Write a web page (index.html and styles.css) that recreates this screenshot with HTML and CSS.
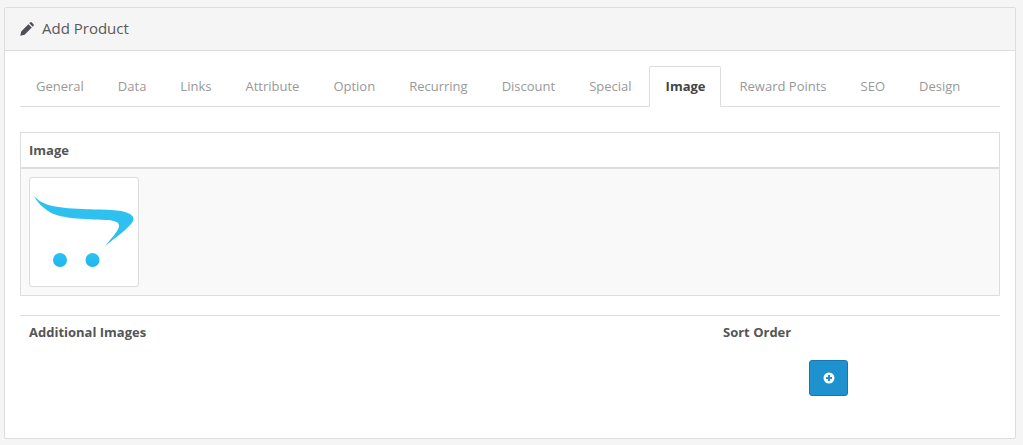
FILE: index.html
```html
<!DOCTYPE html>
<html lang="en">
<head>
<meta charset="utf-8">
<title>Add Product</title>
<link rel="stylesheet" href="styles.css">
</head>
<body>
<div class="panel">
  <div class="panel-heading">
    <svg class="pencil" viewBox="0 0 14 14" width="14" height="14"><path d="M0.3 13.7 L1.2 9.4 L8.4 2.2 L11.8 5.6 L4.6 12.8 Z M9.3 1.3 L10.4 0.3 Q11 -0.1 11.6 0.3 L13.7 2.4 Q14.1 3 13.7 3.6 L12.7 4.7 Z" fill="#4f4f57"/></svg>
    <h3>Add Product</h3>
  </div>
  <div class="panel-body">
    <ul class="tabs">
      <li>General</li><li>Data</li><li>Links</li><li>Attribute</li><li>Option</li><li>Recurring</li><li>Discount</li><li>Special</li><li class="active">Image</li><li>Reward Points</li><li>SEO</li><li>Design</li>
    </ul>
    <div class="image-table">
      <div class="image-head">Image</div>
      <div class="image-cell">
        <div class="thumb">
          <svg viewBox="0 0 108 108" width="108" height="108">
            <defs><linearGradient id="dot" x1="0" y1="0" x2="0" y2="1"><stop offset="0" stop-color="#2cc5f2"/><stop offset="1" stop-color="#1fb3ec"/></linearGradient></defs>
            <path d="M4 18 C12 27 24 30 53 31 C72 32 92 31 100 36 C105 39 104 43 101 46 C94 54 85 60 75 68 C82 60 87 54 89 49 C90 44 84 42 76 42 C54 41 30 41 18 33 C12 29 7 24 4 18 Z" fill="#2ec0ee"/>
            <circle cx="30" cy="82" r="7" fill="url(#dot)"/>
            <circle cx="62.500" cy="82" r="7" fill="url(#dot)"/>
          </svg>
        </div>
      </div>
    </div>
    <div class="extra">
      <div class="extra-head"><span class="col-images">Additional Images</span><span class="col-sort">Sort Order</span></div>
      <div class="extra-foot">
        <button class="add" type="button" aria-label="Add image">
          <svg viewBox="0 0 12 12" width="12" height="12"><circle cx="6" cy="6" r="5.500" fill="#fff"/><path d="M3 5h2V3h2v2h2v2H7v2H5V7H3z" fill="#1e91cf"/></svg>
        </button>
      </div>
    </div>
  </div>
</div>
</body>
</html>
```
FILE: styles.css
```css
* { box-sizing: border-box; }
html, body { margin: 0; height: 445px; overflow: hidden; }
body {
  background: #f5f5f5;
  padding: 7px 7px 0 4px;
  font-family: "Open Sans", sans-serif;
  font-size: 13px;
  color: #666;
}
.panel {
  height: 432px;
  background: #fff;
  border: 1px solid #ddd;
  border-radius: 2px;
}
.panel-heading {
  height: 43px;
  display: flex;
  align-items: center;
  padding-left: 15px;
  gap: 8px;
  background: #f5f5f5;
  border-bottom: 1px solid #ddd;
}
.pencil { flex: none; }
.panel-heading h3 {
  margin: 0 0 2px;
  font-size: 15px;
  font-weight: 400;
  color: #595959;
}
.panel-body { padding: 15px 15px 0; }
.tabs {
  list-style: none;
  margin: 0 0 25px;
  padding: 0;
  height: 41px;
  display: flex;
  gap: 2px;
  border-bottom: 1px solid #ddd;
}
.tabs li {
  height: 41px;
  padding: 10px 16px 0;
  line-height: 20px;
  color: #999;
  white-space: nowrap;
}
.tabs .active {
  margin: 0 1px 0 -1px;
  padding: 9px 14px 0 16px;
  height: 41px;
  background: #fff;
  border: 1px solid #ddd;
  border-bottom-color: #fff;
  border-radius: 2px 2px 0 0;
  font-weight: 700;
  color: #444;
}
.image-table { border: 1px solid #ddd; }
.image-head {
  height: 36px;
  padding: 0 8px;
  line-height: 34px;
  font-weight: 700;
  color: #555;
  border-bottom: 2px solid #ddd;
}
.image-cell { height: 126px; padding: 8px; background: #f9f9f9; }
.thumb {
  width: 110px;
  height: 110px;
  background: #fff;
  border: 1px solid #ddd;
  border-radius: 3px;
}
.thumb svg { display: block; }
.extra { margin-top: 19px; border-top: 1px solid #ddd; }
.extra-head { display: flex; padding-top: 7px; line-height: 18px; font-weight: 700; color: #555; }
.col-images { width: 703px; padding-left: 9px; }
.col-sort { width: 100px; }
.extra-foot { display: flex; padding: 19px 0 0 789px; }
.add {
  width: 39px;
  height: 36px;
  padding: 0;
  display: flex;
  align-items: center;
  justify-content: center;
  background: #1e91cf;
  border: 1px solid #1978ab;
  border-radius: 3px;
}
```
